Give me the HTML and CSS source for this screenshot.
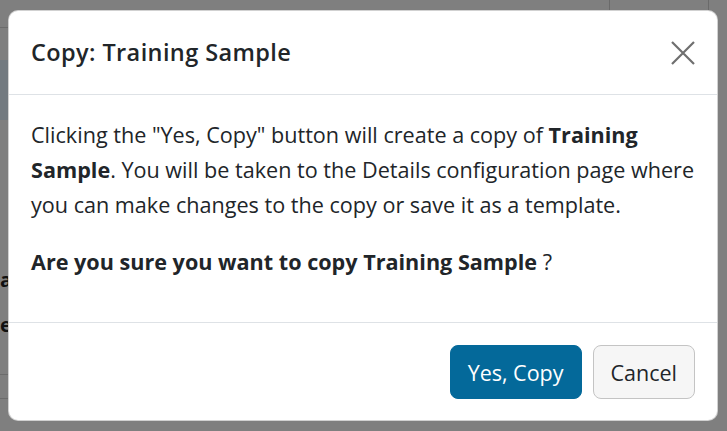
FILE: index.html
```html
<!DOCTYPE html>
<html lang="en">
<head>
<meta charset="utf-8">
<title>Copy: Training Sample</title>
<link rel="stylesheet" href="styles.css">
</head>
<body>
<div class="page">
  <div class="bg-topbar"></div>
  <div class="bg-side"></div>
  <div class="bg-line bg-line-a"></div>
  <div class="bg-line bg-line-b"></div>
  <span class="bg-letter bg-letter-a">a</span>
  <span class="bg-letter bg-letter-e">e</span>
  <div class="bg-rule bg-rule-1"></div>
  <div class="bg-rule bg-rule-2"></div>

  <div class="modal" role="dialog" aria-labelledby="modal-title">
    <div class="modal-header">
      <h5 class="modal-title" id="modal-title">Copy: Training Sample</h5>
      <button class="btn-close" type="button" aria-label="Close">
        <svg width="24" height="24" viewBox="0 0 24 24" aria-hidden="true">
          <path d="M1 1 L23 23 M23 1 L1 23" stroke="#6f6f6f" stroke-width="2.2" fill="none"/>
        </svg>
      </button>
    </div>
    <div class="modal-body">
      <p>Clicking the "Yes, Copy" button will create a copy of <strong>Training Sample</strong>. You will be taken to the Details configuration page where you can make changes to the copy or save it as a template.</p>
      <p><strong>Are you sure you want to copy Training Sample</strong> ?</p>
    </div>
    <div class="modal-footer">
      <button class="btn btn-primary" type="button">Yes, Copy</button>
      <button class="btn btn-secondary" type="button">Cancel</button>
    </div>
  </div>
</div>
</body>
</html>
```

FILE: styles.css
```css
* {
  box-sizing: border-box;
}

html, body {
  margin: 0;
  padding: 0;
}

body {
  font-family: "Open Sans", "Noto Sans", "Liberation Sans", sans-serif;
  color: #212529;
  background: #808080;
}

.page {
  position: relative;
  width: 727px;
  height: 431px;
  overflow: hidden;
  background: #7f7f7f;
  padding: 10px 0 0 8px;
}

/* faint page content under the backdrop */
.bg-topbar {
  position: absolute;
  left: 0;
  top: 27px;
  width: 8px;
  height: 1px;
  background: #6c6c6c;
}

.bg-side {
  position: absolute;
  left: 0;
  top: 60px;
  width: 8px;
  height: 60px;
  background: #737a80;
}

.bg-line {
  position: absolute;
  top: 0;
  width: 1px;
  height: 10px;
  background: #6a6a6a;
}

.bg-line-a { left: 609px; }
.bg-line-b { left: 708px; }

.bg-letter {
  position: absolute;
  left: 0;
  font-weight: 700;
  font-size: 20px;
  line-height: 1;
  color: #111;
}

.bg-letter-a { top: 270px; }
.bg-letter-e { top: 315px; }

.bg-rule {
  position: absolute;
  left: 0;
  width: 8px;
  height: 1px;
  background: #6c6c6c;
}

.bg-rule-1 { top: 374px; }
.bg-rule-2 { top: 398px; }

.modal {
  position: relative;
  z-index: 1;
  width: 710px;
  height: 411px;
  background: #fff;
  border: 1px solid rgba(0, 0, 0, 0.18);
  border-radius: 10px;
  display: flex;
  flex-direction: column;
}

.modal-header {
  display: flex;
  align-items: center;
  justify-content: space-between;
  height: 84px;
  padding: 0 22px;
  border-bottom: 1px solid #dee2e6;
}

.modal-title {
  margin: 0;
  font-size: 23.5px;
  font-weight: 600;
  line-height: 1.5;
  letter-spacing: 0.4px;
}

.btn-close {
  background: none;
  border: 0;
  padding: 0;
  width: 24px;
  height: 24px;
  display: flex;
  cursor: pointer;
}

.modal-body {
  padding: 22px 22px 0;
  flex: 1;
}

.modal-body p {
  margin: 0 0 22px;
  font-size: 21.6px;
  line-height: 35px;
}

.modal-footer {
  display: flex;
  justify-content: flex-end;
  gap: 11px;
  padding: 22px 22px 0;
  height: 98px;
  border-top: 1px solid #dee2e6;
}

.btn {
  height: 54px;
  font-family: inherit;
  font-size: 21.5px;
  border-radius: 8px;
  padding: 0 17px;
  cursor: pointer;
}

.btn-primary {
  background: #04699a;
  border: 1px solid #04699a;
  color: #fff;
}

.btn-secondary {
  background: #f6f6f6;
  border: 1px solid #c4c4c4;
  color: #212529;
}
```
